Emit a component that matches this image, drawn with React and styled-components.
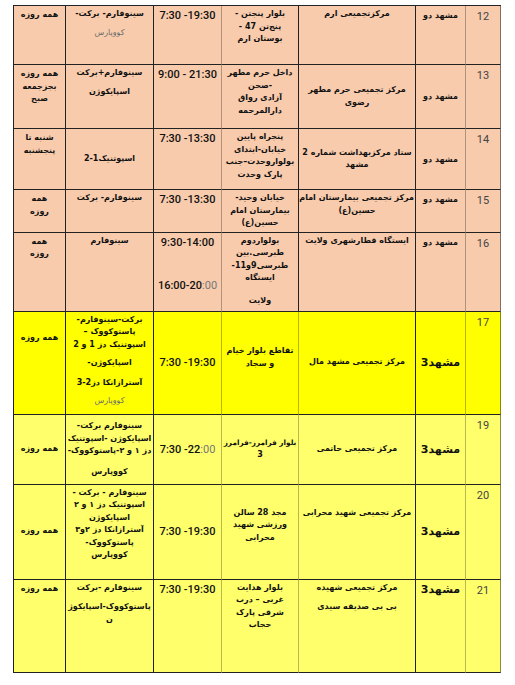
import styled, { createGlobalStyle } from "styled-components";

const GlobalStyle = createGlobalStyle`
  html, body { margin: 0; padding: 0; background: #fff; }
  body { font-family: "DejaVu Sans", sans-serif; }
`;

const tones = { peach: "#f8cbad", yellow: "#ffff00", pale: "#ffff6b" };

const Page = styled.div`
  padding: 5px 14px 12px 13px;
`;

const Sheet = styled.table`
  width: 488px;
  table-layout: fixed;
  border-collapse: separate;
  border-spacing: 0;
  direction: rtl;
  border-top: 1px solid #222;
`;

const Row = styled.tr`
  background: ${(p) => tones[p.$tone]};
  height: ${(p) => p.$h}px;
`;

const Cell = styled.td`
  vertical-align: ${(p) => p.$v || "top"};
  text-align: center;
  padding: ${(p) => p.$pad || "2px 1px"};
  border-bottom: 1px solid #222;
  border-left: 1px solid ${(p) => (p.$soft ? "rgba(0,0,0,0.28)" : "#222")};
  font: bold 8px/12.5px "DejaVu Sans", sans-serif;
  color: #111;
  overflow: hidden;
  white-space: nowrap;
  &:first-child {
    border-right: 1px solid rgba(0, 0, 0, 0.45);
  }
`;

const Num = styled.div`
  font: 400 11px/14px Roboto, "Liberation Sans", sans-serif;
  color: #444;
  padding-top: 2px;
`;

const City = styled.div`
  font-size: ${(p) => (p.$big ? "11px" : "8px")};
  line-height: 13px;
`;

const Line = styled.div`
  margin-top: ${(p) => p.$gap || 0}px;
  font-size: ${(p) => (p.$size ? `${p.$size}px` : "inherit")};
`;

const Muted = styled.div`
  margin-top: ${(p) => p.$gap || 0}px;
  font-weight: 400;
  color: #6b6b6b;
`;

const Time = styled.div`
  direction: ltr;
  font: 500 11px/13px Roboto, "Liberation Sans", sans-serif;
  color: #111;
  margin-top: ${(p) => p.$gap || 0}px;
`;

const Grey = styled.span`
  color: #777;
  font-weight: 400;
`;

const cols = [36, 50, 117, 77, 68, 88, 52];

const Lines = ({ items }) =>
  items.map((it, i) =>
    typeof it === "string" ? (
      <Line key={i}>{it}</Line>
    ) : it.muted ? (
      <Muted key={i} $gap={it.gap}>
        {it.text}
      </Muted>
    ) : (
      <Line key={i} $gap={it.gap} $size={it.size}>
        {it.text}
      </Line>
    )
  );

const rows = [
  {
    n: "12", tone: "peach", h: 59,
    city: { text: "مشهد دو" },
    center: { items: ["مرکزتجمیعی ارم"] },
    address: { items: ["بلوار پنجتن -", "پنج‌تن 47 -", "بوستان ارم"] },
    time: [{ t: "7:30 -19:30" }],
    drug: { items: ["سینوفارم- برکت-", { text: "کووپارس", muted: true, gap: 6 }] },
    days: { items: ["همه روزه"] },
  },
  {
    n: "13", tone: "peach", h: 64,
    city: { text: "مشهد دو", v: "middle" },
    center: { items: ["مرکز تجمیعی حرم مطهر", "رضوی"], v: "middle" },
    address: { items: ["داخل حرم مطهر", "-صحن", "آزادی رواق", "دارالمرحمه"] },
    time: [{ t: "9:00 - 21:30" }],
    drug: { items: ["سینوفارم+برکت", { text: "اسپایکوژن", gap: 6 }] },
    days: { items: ["همه روزه", "بجزجمعه", "صبح"] },
  },
  {
    n: "14", tone: "peach", h: 61,
    city: { text: "مشهد دو", v: "middle" },
    center: { items: ["ستاد مرکزبهداشت شماره 2", "مشهد"], v: "middle" },
    address: { items: ["پنجراه پایین", "خیابان-ابتدای", "بولواروحدت–جنب", "پارک وحدت"] },
    time: [{ t: "7:30 -13:30" }],
    drug: { items: ["اسپوتنیک1-2"], v: "middle" },
    days: { items: ["شنبه تا", "پنجشنبه"] },
  },
  {
    n: "15", tone: "peach", h: 40,
    city: { text: "مشهد دو" },
    center: { items: ["مرکز تجمیعی بیمارستان امام", "حسین(ع)"] },
    address: { items: ["خیابان وحید-", "بیمارستان امام", "حسین(ع)"] },
    time: [{ t: "7:30 -13:30" }],
    drug: { items: ["سینوفارم- برکت"] },
    days: { items: ["همه", "روزه"] },
  },
  {
    n: "16", tone: "peach", h: 79,
    city: { text: "مشهد دو" },
    center: { items: ["ایستگاه قطارشهری ولایت"] },
    address: { items: ["بولواردوم", "طبرسی.بین", "طبرسی9و11-", "ایستگاه", { text: "ولایت", gap: 10 }] },
    time: [{ t: "9:30-14:00" }, { t: "16:00-20", g: ":00", gap: 30 }],
    drug: { items: ["سینوفارم"] },
    days: { items: ["همه", "روزه"] },
  },
  {
    n: "17", tone: "yellow", h: 103, soft: true,
    city: { text: "مشهد3", big: true, v: "middle" },
    center: { items: ["مرکز تجمیعی مشهد مال"], v: "middle" },
    address: { items: ["تقاطع بلوار خیام", "و سجاد"], v: "middle", pad: "2px 1px 12px" },
    time: [{ t: "7:30 -19:30" }], timeV: "middle",
    drug: {
      items: [
        "برکت-سینوفارم-",
        "پاستوکووک –",
        "اسپوتنیک دز 1 و 2",
        { text: "اسپایکوژن-", gap: 6 },
        { text: "آسترازانکا دز2-3", gap: 7 },
        { text: "کووپارس", muted: true, gap: 6 },
      ],
    },
    days: { items: ["همه روزه"], pad: "20px 1px 2px" },
  },
  {
    n: "19", tone: "pale", h: 70, soft: true,
    city: { text: "مشهد3", big: true, v: "middle" },
    center: { items: ["مرکز تجمیعی حاتمی"], v: "middle" },
    address: { items: [{ text: "بلوار فرامرز-فرامرز", size: 7.3 }, "3"], v: "middle", pad: "2px 0" },
    time: [{ t: "7:30 -22", g: ":00" }], timeV: "middle",
    drug: {
      items: ["سینوفارم برکت-", "اسپایکوژن -اسپوتنیک", "دز ۱ و ۲-پاستوکووک-", { text: "کووپارس", gap: 8 }],
      v: "middle",
    },
    days: { items: ["همه روزه"], v: "middle" },
  },
  {
    n: "20", tone: "pale", h: 95, soft: true,
    city: { text: "مشهد3", big: true, v: "middle" },
    center: { items: ["مرکز تجمیعی شهید محرابی"], pad: "22px 1px 2px" },
    address: { items: ["مجد 28 سالن", "ورزشی شهید", "محرابی"], pad: "22px 1px 2px" },
    time: [{ t: "7:30 -19:30" }], timeV: "middle",
    drug: {
      items: ["سینوفارم - برکت -", "اسپوتنیک دز ۱ و ۲", "اسپایکوژن", "آسترازانکا دز ۲و۳", "پاستوکووک-", "کووپارس"],
    },
    days: { items: ["همه روزه"], v: "middle" },
  },
  {
    n: "21", tone: "pale", h: 93, soft: true,
    city: { text: "مشهد3", big: true },
    center: { items: ["مرکز تجمیعی شهیده", { text: "بی بی صدیقه سیدی", gap: 7 }] },
    address: { items: ["بلوار هدایت", "غربی – درب", "شرقی پارک", "حجاب"] },
    time: [{ t: "7:30 -19:30" }],
    drug: { items: ["سینوفارم -برکت", { text: "پاستوکووک-اسپایکوژ", gap: 7 }, "ن"] },
    days: { items: ["همه روزه"] },
  },
];

export default function App() {
  return (
    <Page>
      <GlobalStyle />
      <Sheet>
        <colgroup>
          {cols.map((w, i) => (
            <col key={i} style={{ width: w }} />
          ))}
        </colgroup>
        <tbody>
          {rows.map((r) => (
            <Row key={r.n} $tone={r.tone} $h={r.h}>
              <Cell $soft>
                <Num>{r.n}</Num>
              </Cell>
              <Cell $v={r.city.v} $pad="3px 1px">
                <City $big={r.city.big}>{r.city.text}</City>
              </Cell>
              <Cell $v={r.center.v} $pad={r.center.pad} $soft={r.soft}>
                <Lines items={r.center.items} />
              </Cell>
              <Cell $v={r.address.v} $pad={r.address.pad} $soft>
                <Lines items={r.address.items} />
              </Cell>
              <Cell $v={r.timeV} $pad="3px 1px">
                {r.time.map((t, i) => (
                  <Time key={i} $gap={t.gap}>
                    {t.t}
                    {t.g && <Grey>{t.g}</Grey>}
                  </Time>
                ))}
              </Cell>
              <Cell $v={r.drug.v} $pad={r.drug.pad}>
                <Lines items={r.drug.items} />
              </Cell>
              <Cell $v={r.days.v} $pad={r.days.pad || "3px 1px"}>
                <Lines items={r.days.items} />
              </Cell>
            </Row>
          ))}
        </tbody>
      </Sheet>
    </Page>
  );
}
